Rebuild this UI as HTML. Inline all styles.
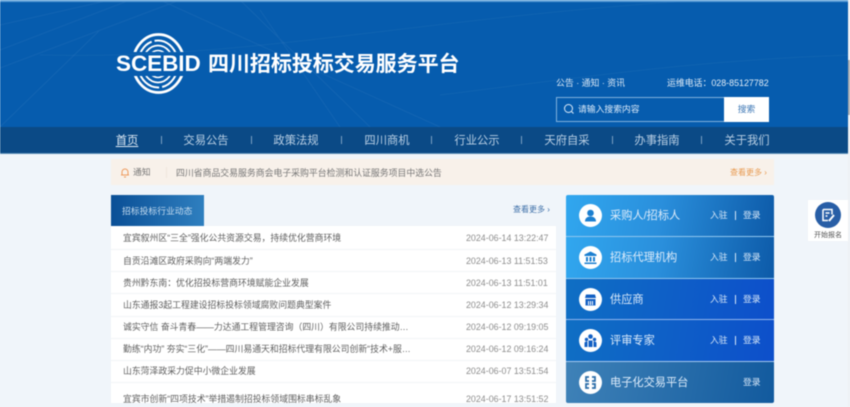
<!DOCTYPE html>
<html lang="zh"><head><meta charset="utf-8"><title>四川招标投标交易服务平台</title>
<style>
*{box-sizing:border-box;margin:0;padding:0}
html,body{width:850px;height:407px;overflow:hidden;background:#f0f5fa;font-family:"Liberation Sans","Noto Sans CJK SC",sans-serif}
.a{position:absolute;white-space:nowrap}
#page{position:relative;width:850px;height:407px;overflow:hidden;filter:blur(.4px)}
#hd{left:0;top:0;width:850px;height:127px;background:#065cae;overflow:hidden}
#nav{left:0;top:127px;width:850px;height:27px;background:#0b4a86;border-bottom:1px solid #5d8fb8}
.nv{top:128px;height:27px;line-height:27px;font-size:11.3px;color:#b9cfe4;transform:translateX(-50%)}
.sp{top:136px;width:1px;height:8px;background:#7c9fc2}
.t{left:123px;font-size:8.85px;color:#5f5f5f;line-height:14px}
.d{left:466px;font-size:8.9px;color:#8d8d8d;line-height:14px}
.card{left:566px;width:208px;height:41px}
.ic{left:579px;width:23px;height:23px;border-radius:50%;background:#fff}
.ct{left:610px;font-size:11.2px;color:#dcebfa;line-height:16px}
.lk{font-size:8.8px;color:#d5e6f7;line-height:14px}
.bar{left:735px;width:1px;height:9px;background:#d5e6f7}
.ln{left:111px;width:445px;height:1px;background:#f1f4f7}
</style></head><body>
<div id="page">
<div class="a" id="hd">
<svg width="850" height="127" style="position:absolute;left:0;top:0" fill="none">
<path d="M0 50L130 0M0 68L180 0M240 0L370 127M260 10L340 127M160 0L440 127M0 25L110 0M0 127L100 30" stroke="#fff" stroke-opacity=".055"/>
<path d="M40 55C250 60 400 20 700 0M440 95C600 75 700 60 850 55" stroke="#fff" stroke-opacity=".045"/>
</svg>
<div class="a" style="left:0;top:0;width:850px;height:1.500px;background:#5e9fd8"></div>
</div>
<svg class="a" style="left:116px;top:30px" width="86" height="68" viewBox="0 0 86 68" fill="none" stroke="#fff">
<defs><clipPath id="cl"><path d="M0 0H86V22H0zM0 46H86V68H0z"/></clipPath></defs>
<g clip-path="url(#cl)">
<ellipse cx="42.500" cy="33.500" rx="25.500" ry="29" stroke-width="2.800"/>
<ellipse cx="42" cy="34" rx="20" ry="23.500" stroke-width="2" stroke-dasharray="30 3"/>
<ellipse cx="42" cy="34" rx="15.500" ry="18.500" stroke-width="1.800"/>
<ellipse cx="42" cy="34" rx="11" ry="13.500" stroke-width="1.600"/>
</g>
</svg>
<div class="a" style="left:116px;top:51px;font-size:22.5px;font-weight:700;color:#fff;line-height:26px;letter-spacing:-.05px">SCEBID</div>
<div class="a" style="left:208px;top:53px;font-size:21px;font-weight:700;color:#fff;line-height:24px;letter-spacing:-.04px">四川招标投标交易服务平台</div>
<div class="a" style="left:556px;top:77px;font-size:8.9px;color:#d8e6f4;line-height:13px">公告&nbsp;·&nbsp;通知&nbsp;·&nbsp;资讯</div>
<div class="a" style="left:667px;top:77px;font-size:8.9px;color:#e2edf7;line-height:13px">运维电话：028-85127782</div>
<div class="a" style="left:556px;top:97px;width:213px;height:25px;border:1px solid #7fb0dc"></div>
<svg class="a" style="left:563px;top:103px" width="12" height="12" fill="none" stroke="#dcebfa" stroke-width="1"><circle cx="5.500" cy="5.500" r="4"/><path d="M8.500 8.500l2 2"/></svg>
<div class="a" style="left:578px;top:102px;font-size:8.8px;color:#dcebfa;line-height:14px">请输入搜索内容</div>
<div class="a" style="left:724px;top:97px;width:45px;height:25px;background:#fff;color:#3f78b5;font-size:8.8px;line-height:25px;text-align:center">搜索</div>
<div class="a" id="nav"></div>
<div class="a nv" style="left:127px;color:#e4eef7;text-decoration:underline;text-underline-offset:2px">首页</div>
<div class="a sp" style="left:161px"></div>
<div class="a nv" style="left:206px">交易公告</div>
<div class="a sp" style="left:251px"></div>
<div class="a nv" style="left:296px">政策法规</div>
<div class="a sp" style="left:341px"></div>
<div class="a nv" style="left:387px">四川商机</div>
<div class="a sp" style="left:431px"></div>
<div class="a nv" style="left:477px">行业公示</div>
<div class="a sp" style="left:521px"></div>
<div class="a nv" style="left:567px">天府自采</div>
<div class="a sp" style="left:612px"></div>
<div class="a nv" style="left:657px">办事指南</div>
<div class="a sp" style="left:701px"></div>
<div class="a nv" style="left:747px">关于我们</div>

<div class="a" style="left:111px;top:159px;width:663px;height:26px;background:#f8f1ea"></div>
<svg class="a" style="left:120px;top:167px" width="10" height="11" fill="none" stroke="#ee9a5c" stroke-width="1"><path d="M2 8V5a3 3 0 0 1 6 0v3M1 8h8M4 10h2"/></svg>
<div class="a" style="left:133px;top:166px;font-size:8.8px;color:#777;line-height:13px">通知</div>
<div class="a" style="left:166px;top:167px;width:1px;height:11px;background:#efe6dc"></div>
<div class="a" style="left:176px;top:166px;font-size:8.87px;color:#777;line-height:14px">四川省商品交易服务商会电子采购平台检测和认证服务项目中选公告</div>
<div class="a" style="left:730px;top:166px;font-size:8px;color:#e89a50;line-height:13px">查看更多 ›</div>

<div class="a" style="left:111px;top:195px;width:93px;height:31px;background:linear-gradient(90deg,#0a4f96,#2f7fbf);color:#c5dcf0;font-size:8.8px;line-height:32px;padding-left:11px">招标投标行业动态</div>
<div class="a" style="left:513px;top:203px;font-size:8px;color:#3d6fa8;line-height:13px">查看更多 ›</div>
<div class="a" style="left:111px;top:226px;width:445px;height:177px;background:#fff"></div>
<div class="a ln" style="top:249px"></div>
<div class="a ln" style="top:271px"></div>
<div class="a ln" style="top:293px"></div>
<div class="a ln" style="top:316px"></div>
<div class="a ln" style="top:338px"></div>
<div class="a ln" style="top:360px"></div>
<div class="a ln" style="top:382px"></div>

<div class="a t" style="top:231px">宜宾叙州区“三全”强化公共资源交易，持续优化营商环境</div><div class="a d" style="top:231px">2024-06-14 13:22:47</div>
<div class="a t" style="top:254px">自贡沿滩区政府采购向“两端发力”</div><div class="a d" style="top:254px">2024-06-13 11:51:53</div>
<div class="a t" style="top:276px">贵州黔东南：优化招投标营商环境赋能企业发展</div><div class="a d" style="top:276px">2024-06-13 11:51:01</div>
<div class="a t" style="top:298px">山东通报3起工程建设招标投标领域腐败问题典型案件</div><div class="a d" style="top:298px">2024-06-12 13:29:34</div>
<div class="a t" style="top:320px">诚实守信 奋斗青春——力达通工程管理咨询（四川）有限公司持续推动…</div><div class="a d" style="top:320px">2024-06-12 09:19:05</div>
<div class="a t" style="top:342px">勤练“内功” 夯实“三化”——四川易通天和招标代理有限公司创新“技术+服…</div><div class="a d" style="top:342px">2024-06-12 09:16:24</div>
<div class="a t" style="top:364px">山东菏泽政采力促中小微企业发展</div><div class="a d" style="top:364px">2024-06-07 13:51:54</div>
<div class="a t" style="top:392px">宜宾市创新“四项技术”举措遏制招投标领域围标串标乱象</div><div class="a d" style="top:392px">2024-06-17 13:51:52</div>

<div class="a card" style="top:195px;background:linear-gradient(100deg,#31a7ef 0,#2a8fdc 45%,#0d5aa8 100%);border-radius:2px 2px 0 0"></div>
<div class="a card" style="top:237px;background:linear-gradient(100deg,#31a7ef 0,#2a8fdc 45%,#0d5aa8 100%)"></div>
<div class="a card" style="top:279px;background:linear-gradient(100deg,#0f6fc4 0,#0d4fcb 100%)"></div>
<div class="a card" style="top:320px;background:linear-gradient(100deg,#0f6fc4 0,#0d4fcb 100%)"></div>
<div class="a card" style="top:362px;background:linear-gradient(100deg,#3f82b8 0,#125a9e 100%);border-radius:0 0 2px 2px"></div>
<div class="a" style="left:566px;top:236px;width:208px;height:1px;background:#8fc6ef"></div>
<div class="a" style="left:566px;top:278px;width:208px;height:1px;background:#8fc6ef"></div>
<div class="a" style="left:566px;top:319px;width:208px;height:1px;background:#8fb4ee"></div>
<div class="a" style="left:566px;top:361px;width:208px;height:1px;background:#a5c8ee"></div>

<div class="a ic" style="top:204px"></div>
<svg class="a" style="left:579px;top:204px" width="23" height="23" fill="#1b7fd0"><circle cx="11.500" cy="9" r="3.300"/><path d="M6 17.500c0-3.500 2.500-5 5.500-5s5.500 1.500 5.500 5z"/></svg>
<div class="a ic" style="top:246px"></div>
<svg class="a" style="left:579px;top:246px" width="23" height="23" fill="#1b7fd0"><path d="M11.500 5.500l6 3v1.500h-12V8.500zM7 11h2v4.500H7zM10.500 11h2v4.500h-2zM14 11h2v4.500h-2zM5.500 16.500h12V18h-12z"/></svg>
<div class="a ic" style="top:288px"></div>
<svg class="a" style="left:579px;top:288px" width="23" height="23" fill="#1260c4"><path d="M7 6.500h9l1 3.500H6zM6.500 11h10v6.500h-10z"/><path d="M9 13h1v4H9zM11 13h1v4h-1zM13 13h1v4h-1z" fill="#fff"/></svg>
<div class="a ic" style="top:329px"></div>
<svg class="a" style="left:579px;top:329px" width="23" height="23" fill="#1260c4"><circle cx="11.500" cy="7.500" r="2.300"/><circle cx="7.500" cy="10.500" r="1.700"/><circle cx="15.500" cy="10.500" r="1.700"/><path d="M5.500 18v-4c0-1 1-1.500 2-1.500h1v5.500zM9.500 18v-6.500h4V18zM14.500 18v-5.500h1c1 0 2 .5 2 1.500v4z"/></svg>
<div class="a ic" style="top:371px"></div>
<svg class="a" style="left:579px;top:371px" width="23" height="23" fill="none" stroke="#2a6ca8" stroke-width="1.700"><path d="M10 6H7v4h3M13 6h3v4h-3M10 13H7v4h3M13 13h3v4h-3"/></svg>

<div class="a ct" style="top:208px">采购人/招标人</div>
<div class="a ct" style="top:250px">招标代理机构</div>
<div class="a ct" style="top:292px">供应商</div>
<div class="a ct" style="top:333px">评审专家</div>
<div class="a ct" style="top:375px">电子化交易平台</div>

<div class="a lk" style="left:710px;top:208px">入驻</div><div class="a bar" style="left:735px;top:211px"></div><div class="a lk" style="left:743px;top:208px">登录</div>
<div class="a lk" style="left:710px;top:250px">入驻</div><div class="a bar" style="left:735px;top:253px"></div><div class="a lk" style="left:743px;top:250px">登录</div>
<div class="a lk" style="left:710px;top:292px">入驻</div><div class="a bar" style="left:735px;top:295px"></div><div class="a lk" style="left:743px;top:292px">登录</div>
<div class="a lk" style="left:710px;top:333px">入驻</div><div class="a bar" style="left:735px;top:336px"></div><div class="a lk" style="left:743px;top:333px">登录</div>
<div class="a lk" style="left:743px;top:375px">登录</div>

<div class="a" style="left:808px;top:200px;width:40px;height:41px;background:#fff"></div>
<div class="a" style="left:815px;top:202px;width:26px;height:26px;border-radius:50%;background:#285ea6"></div>
<svg class="a" style="left:815px;top:202px" width="26" height="26" fill="none" stroke="#fff" stroke-width="1.500"><path d="M8 7.500h9v5M8 7.500v11h5M10.500 11h4M10.500 14h2"/><path d="M14 19l5-6" stroke-width="2"/></svg>
<div class="a" style="left:814px;top:231px;font-size:7px;color:#555;line-height:10px">开始报名</div>
<div class="a" style="left:848px;top:0;width:2px;height:407px;background:#eef1f4"></div>
<div class="a" style="left:848px;top:60px;width:2px;height:55px;background:#a9acb0"></div>
</div>
</body></html>
